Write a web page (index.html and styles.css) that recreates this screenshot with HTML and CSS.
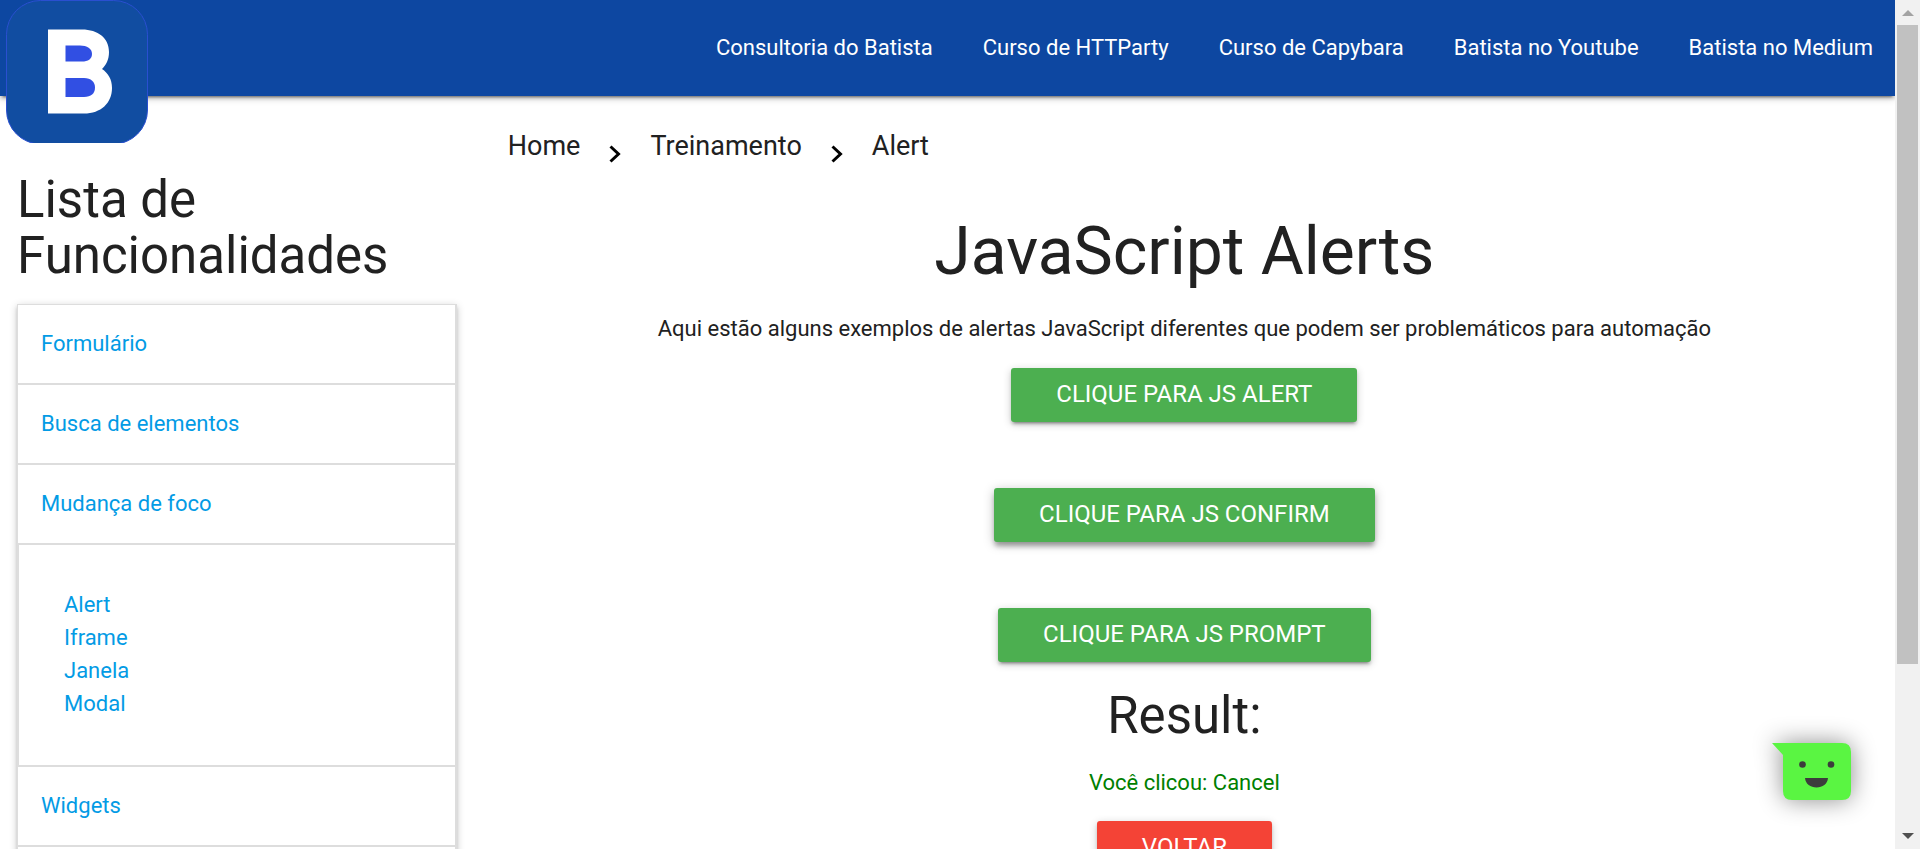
FILE: index.html
```html
<!DOCTYPE html>
<html lang="pt-BR">
<head>
<meta charset="utf-8">
<title>JavaScript Alerts</title>
<link rel="stylesheet" href="styles.css">
</head>
<body>
<div class="page">
  <header class="navbar">
    <a class="brand" href="#" aria-label="Início">
      <svg class="brand-logo" viewBox="0 0 142 143" aria-hidden="true">
        <rect x="0.5" y="0.5" width="141" height="143.500" rx="34" fill="#114da1" stroke="#2a4fd0"/>
        <path d="M42 29.500H76C92 29.500 103 38 103 52C103 60 100 65 96 69C102 73 106 79 106 88C106 103 95 113.500 78 113.500H42Z" fill="#fff"/>
        <path d="M59.500 45.500H74C81 45.500 86 48.500 86 54C86 59 82 61.500 76 61.500H59.500Z" fill="#314fe3"/>
        <path d="M59.500 78H78C85 78 89 82 89 87.500C89 93.500 85 97 78 97H59.500Z" fill="#314fe3"/>
      </svg>
    </a>
    <nav class="nav-links">
      <a href="#">Consultoria do Batista</a>
      <a href="#">Curso de HTTParty</a>
      <a href="#">Curso de Capybara</a>
      <a href="#">Batista no Youtube</a>
      <a href="#">Batista no Medium</a>
    </nav>
  </header>
  <div class="columns">
    <aside class="sidebar">
      <h2 class="heading">Lista de Funcionalidades</h2>
      <ul class="menu">
        <li class="menu-item"><a href="#">Formulário</a></li>
        <li class="menu-item"><a href="#">Busca de elementos</a></li>
        <li class="menu-item"><a href="#">Mudança de foco</a></li>
        <li class="menu-body">
          <a href="#">Alert</a>
          <a href="#">Iframe</a>
          <a href="#">Janela</a>
          <a href="#">Modal</a>
        </li>
        <li class="menu-item"><a href="#">Widgets</a></li>
        <li class="menu-item"></li>
      </ul>
    </aside>
    <main class="content">
      <nav class="breadcrumb" aria-label="Breadcrumb">
        <a href="#">Home</a>
        <svg class="chevron" viewBox="0 0 12 18" aria-hidden="true"><path d="M1.500 1.500L9.500 9L1.500 16.500" fill="none" stroke="#000" stroke-width="3"/></svg>
        <a href="#">Treinamento</a>
        <svg class="chevron" viewBox="0 0 12 18" aria-hidden="true"><path d="M1.500 1.500L9.500 9L1.500 16.500" fill="none" stroke="#000" stroke-width="3"/></svg>
        <a href="#">Alert</a>
      </nav>
      <div class="example">
        <h1 class="title">JavaScript Alerts</h1>
        <p class="text">Aqui estão alguns exemplos de alertas JavaScript diferentes que podem ser problemáticos para automação</p>
        <div class="buttons">
          <button class="btn" type="button">Clique para JS Alert</button>
          <button class="btn btn-raised" type="button">Clique para JS Confirm</button>
          <button class="btn" type="button">Clique para JS Prompt</button>
        </div>
        <h2 class="heading result-heading">Result:</h2>
        <p class="text result">Você clicou: Cancel</p>
        <a class="btn btn-back" href="#">Voltar</a>
      </div>
    </main>
  </div>
  <button class="chat" type="button" aria-label="Abrir chat">
    <svg class="chat-icon" viewBox="0 0 80 57" aria-hidden="true">
      <path d="M0 0H70Q79 0 79 9V48Q79 57 70 57H20Q11 57 11 48V12Z" fill="#5af542"/>
      <circle cx="30.500" cy="21.500" r="3.300" fill="#3c3c3c"/>
      <circle cx="59" cy="21.500" r="3.300" fill="#3c3c3c"/>
      <path d="M33 35H56C55.500 41 50.500 44.500 44.500 44.500S33.500 41 33 35Z" fill="#3c3c3c"/>
    </svg>
  </button>
</div>
<div class="scrollbar" aria-hidden="true">
  <svg class="arrow" viewBox="0 0 12 6"><path d="M0 6L6 0L12 6Z" fill="#a3a3a3"/></svg>
  <div class="track"><div class="thumb"></div></div>
  <svg class="arrow" viewBox="0 0 12 6"><path d="M0 0L6 6L12 0Z" fill="#505050"/></svg>
</div>
</body>
</html>
```
FILE: styles.css
```css
* { box-sizing: border-box; }

body {
  margin: 0;
  display: flex;
  height: 100vh;
  overflow: hidden;
  background: #fff;
  color: #212121;
  font-family: Roboto, "Liberation Sans", sans-serif;
  font-size: 22px;
  line-height: 34px;
}

a { text-decoration: none; }

.page {
  position: relative;
  flex: 1;
  min-width: 0;
  overflow: hidden;
}

.navbar {
  position: relative;
  display: flex;
  justify-content: space-between;
  height: 96px;
  padding: 0 22px 0 6px;
  background: #0d47a1;
  box-shadow: 0 3px 3px rgba(0, 0, 0, 0.14), 0 4px 2px -3px rgba(0, 0, 0, 0.4), 0 2px 8px rgba(0, 0, 0, 0.2);
}

.brand-logo {
  display: block;
  width: 142px;
  height: 143px;
}

.nav-links {
  display: flex;
  gap: 50px;
  line-height: 96px;
}

.nav-links a { color: #fff; }

.columns {
  display: grid;
  grid-template-columns: minmax(0, 1fr) minmax(0, 3fr);
}

.sidebar { padding: 76px 17px 0; }

.heading {
  margin: 0;
  font-size: 51px;
  font-weight: 400;
  line-height: 56px;
}

.menu {
  margin: 20px 0 0;
  padding: 0;
  list-style: none;
  border: 1px solid #ddd;
  border-right-width: 2px;
  box-shadow: 0 3px 3px rgba(0, 0, 0, 0.14), 0 2px 8px rgba(0, 0, 0, 0.2);
}

.menu a { color: #039be5; }

.menu-item {
  padding: 22px 23px;
  border-bottom: 2px solid #ddd;
}

.menu-body {
  display: flex;
  flex-direction: column;
  padding: 43px 45px 45px;
  line-height: 33px;
  border-bottom: 2px solid #ddd;
  border-left: 1px solid #ddd;
}

.content { padding: 0 17px; }

.breadcrumb {
  display: flex;
  align-items: center;
  gap: 29px;
  padding-left: 17px;
  font-size: 27px;
  line-height: 100px;
}

.breadcrumb a { color: #212121; }

.chevron {
  width: 12px;
  height: 18px;
  margin-top: 16px;
}

.example {
  display: flex;
  flex-direction: column;
  align-items: center;
}

.title {
  margin: 20px 0 24px;
  font-size: 66px;
  font-weight: 400;
  line-height: 72px;
}

.text {
  margin: 0;
}

.buttons {
  display: flex;
  flex-direction: column;
  align-items: center;
  gap: 66px;
  margin-top: 22px;
}

.btn {
  height: 54px;
  padding: 0 45px 2px;
  border: 0;
  border-radius: 3px;
  background: #4caf50;
  color: #fff;
  font-family: inherit;
  font-size: 24px;
  line-height: 52px;
  text-transform: uppercase;
  box-shadow: 0 3px 3px rgba(0, 0, 0, 0.14), 0 4px 2px -3px rgba(0, 0, 0, 0.3), 0 2px 8px rgba(0, 0, 0, 0.2);
}

.btn-raised {
  box-shadow: 0 5px 5px -1px rgba(0, 0, 0, 0.3), 0 2px 11px rgba(0, 0, 0, 0.25);
}

.btn-back { background: #f44336; }

.result-heading { margin: 26px 0 22px; }

.result {
  margin-bottom: 21px;
  color: green;
}

.chat {
  position: absolute;
  right: 43px;
  bottom: 49px;
  padding: 0;
  border: 0;
  background: none;
}

.chat-icon {
  display: block;
  width: 80px;
  height: 57px;
  overflow: visible;
  filter: drop-shadow(0 0 12px rgba(0, 0, 0, 0.45));
}

.scrollbar {
  display: flex;
  flex-direction: column;
  align-items: center;
  width: 25px;
  padding: 10px 0;
  background: #f1f1f1;
}

.arrow {
  width: 12px;
  height: 6px;
}

.track {
  flex: 1;
  padding: 9px 0;
}

.thumb {
  width: 21px;
  height: 80%;
  background: #c1c1c1;
}
```
